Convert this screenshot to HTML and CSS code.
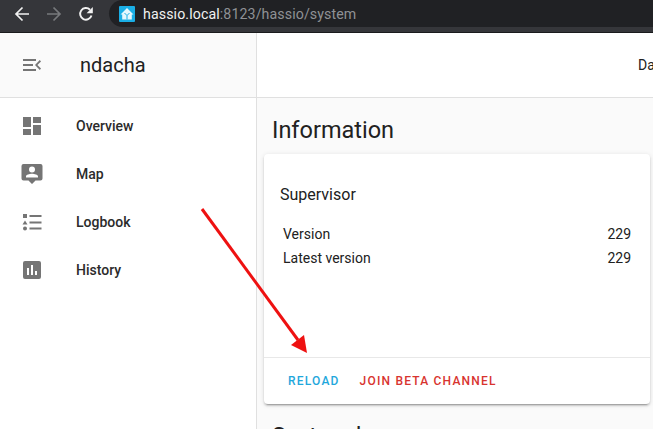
FILE: index.html
```html
<!DOCTYPE html>
<html lang="en">
<head>
<meta charset="utf-8">
<title>hassio.local</title>
<link rel="stylesheet" href="styles.css">
</head>
<body>
<div class="chrome">
  <svg class="cicon" viewBox="0 0 16 16"><path d="M15 8H2M8.500 1.500 2 8 8.500 14.500" fill="none" stroke="#f1f1f1" stroke-width="1.700"/></svg>
  <svg class="cicon" viewBox="0 0 16 16"><path d="M1 8H14M7.500 1.500 14 8 7.500 14.500" fill="none" stroke="#77797c" stroke-width="1.700"/></svg>
  <svg class="cicon" viewBox="0 0 16 16"><path d="M13.500 9.500A5.800 5.800 0 1 1 12 3.700" fill="none" stroke="#f1f1f1" stroke-width="1.900"/><path d="M14.800 1V7.200H8.600Z" fill="#f1f1f1"/></svg>
  <div class="omnibox">
    <svg class="favicon" viewBox="0 0 16 16"><rect width="16" height="16" rx="1" fill="#1aaee5"/><path d="M8 2 14.500 8.500H12.800V13.500H3.200V8.500H1.500Z" fill="#e6f7fd"/><path d="M5.500 7 8 9.500 10.500 7M8 9.500V13.500" fill="none" stroke="#1aaee5" stroke-width="1"/></svg>
    <span class="host">hassio.local</span><span class="path">:8123/hassio/system</span>
  </div>
</div>
<div class="app">
  <aside class="sidebar">
    <div class="side-head">
      <svg class="menu" viewBox="0 0 24 24"><path d="M3 6H16V8H3ZM3 11H13V13H3ZM3 16H16V18H3ZM21 8.400 17.400 12 21 15.600 19.800 17 15 12 19.800 7Z" fill="#757575"/></svg>
      <span class="brand">ndacha</span>
    </div>
    <nav class="nav">
      <a class="nav-item"><svg viewBox="0 0 24 24"><path d="M3 3H11V13H3ZM13 3H21V9H13ZM3 15H11V21H3ZM13 11H21V21H13Z" fill="#757575"/></svg><span>Overview</span></a>
      <a class="nav-item"><svg viewBox="0 0 24 24"><path fill-rule="evenodd" d="M3.500 2H20.500A2 2 0 0 1 22.500 4V16.500A2 2 0 0 1 20.500 18.500H15.500L12 22 8.500 18.500H3.500A2 2 0 0 1 1.500 16.500V4A2 2 0 0 1 3.500 2ZM12 4.500A3 3 0 1 0 12 10.500 3 3 0 1 0 12 4.500ZM6 15.500H18V14.500C18 12.800 14.500 11.800 12 11.800S6 12.800 6 14.500Z" fill="#757575"/></svg><span>Map</span></a>
      <a class="nav-item"><svg viewBox="0 0 24 24"><path d="M3 4H7V8H3ZM5 10.500 7.500 14.500H2.500ZM5 16.500A2 2 0 1 1 5 20.500 2 2 0 1 1 5 16.500ZM9.500 5H21.500V7H9.500ZM9.500 11.500H21.500V13.500H9.500ZM9.500 17.500H21.500V19.500H9.500Z" fill="#757575"/></svg><span>Logbook</span></a>
      <a class="nav-item"><svg viewBox="0 0 24 24"><path fill-rule="evenodd" d="M5 3H19A2 2 0 0 1 21 5V19A2 2 0 0 1 19 21H5A2 2 0 0 1 3 19V5A2 2 0 0 1 5 3ZM7 10V17H9V10ZM11 7V17H13V7ZM15 13V17H17V13Z" fill="#757575"/></svg><span>History</span></a>
    </nav>
  </aside>
  <main class="main">
    <header class="topbar"><span class="tab">Dashboard</span></header>
    <section class="content">
      <h1 class="title">Information</h1>
      <div class="card">
        <div class="card-body">
          <h2 class="card-title">Supervisor</h2>
          <div class="row"><span>Version</span><span>229</span></div>
          <div class="row"><span>Latest version</span><span>229</span></div>
        </div>
        <div class="card-actions">
          <span class="btn btn-blue">RELOAD</span>
          <span class="btn btn-red">JOIN BETA CHANNEL</span>
        </div>
      </div>
      <h1 class="title title-next">System log</h1>
    </section>
  </main>
</div>
<svg class="arrow" viewBox="0 0 653 429"><path d="M202 209 298 340" fill="none" stroke="#ee1111" stroke-width="3"/><path d="M307 353 291 345 304 335Z" fill="#ee1111"/></svg>
</body>
</html>
```
FILE: styles.css
```css
* { box-sizing: border-box; }
html, body { margin: 0; height: 429px; overflow: hidden; background: #fff; }
body { font-family: Roboto, "Liberation Sans", sans-serif; color: #212121; position: relative; }
.chrome { height: 33px; background: #35363a; border-bottom: 1px solid #1a1b1d; display: flex; align-items: center; padding: 0 0 5px 14px; gap: 16px; overflow: hidden; }
.cicon { width: 16px; height: 16px; flex: none; }
.omnibox { flex: 1; height: 27px; margin-left: -1px; background: #202124; border-radius: 14px 0 0 14px; display: flex; align-items: center; padding-left: 10px; font-size: 14.200px; letter-spacing: .1px; }
.favicon { width: 16px; height: 16px; margin-right: 8px; }
.host { color: #f1f1f1; }
.path { color: #8f9195; }
.app { display: flex; height: 396px; }
.sidebar { width: 257px; flex: none; border-right: 1px solid #e0e0e0; background: #fff; }
.side-head { height: 65px; background: #fafafa; border-bottom: 1px solid #e0e0e0; display: flex; align-items: center; padding-left: 20px; }
.menu { width: 24px; height: 24px; }
.brand { margin-left: 36px; font-size: 20px; }
.nav { padding-top: 4px; }
.nav-item { height: 48px; display: flex; align-items: center; padding-left: 20px; font-size: 14px; font-weight: 500; color: #2b2b2b; }
.nav-item svg { width: 24px; height: 24px; margin-right: 32px; flex: none; }
.main { flex: 1; min-width: 0; }
.topbar { height: 65px; background: #fff; border-bottom: 1px solid #e0e0e0; display: flex; align-items: center; padding-left: 381px; white-space: nowrap; overflow: hidden; font-size: 14px; }
.content { background: #fafafa; height: 331px; padding: 16px 3px 0 7px; overflow: hidden; }
.title { margin: 0; padding-left: 8px; font-size: 23.500px; font-weight: 400; line-height: 32px; }
.card { height: 250px; margin-top: 8px; background: #fff; border-radius: 4px; box-shadow: 0 2px 2px rgba(0,0,0,.14), 0 1px 5px rgba(0,0,0,.12), 0 3px 1px -2px rgba(0,0,0,.2); display: flex; flex-direction: column; }
.card-body { flex: 1; padding: 31px 19px 0 16px; }
.card-title { margin: 0 0 17px; font-size: 16px; font-weight: 400; line-height: 20px; }
.row { display: flex; justify-content: space-between; height: 24px; align-items: center; padding-left: 3px; font-size: 14px; }
.card-actions { height: 47px; border-top: 1px solid #e8e8e8; display: flex; align-items: center; padding-left: 24px; gap: 20px; font-size: 12px; font-weight: 500; letter-spacing: 1.200px; }
.btn-blue { color: #1fa7dc; }
.btn-red { color: #d8342f; }
.title-next { margin-top: 16px; }
.arrow { position: absolute; left: 0; top: 0; width: 653px; height: 429px; pointer-events: none; }
```
